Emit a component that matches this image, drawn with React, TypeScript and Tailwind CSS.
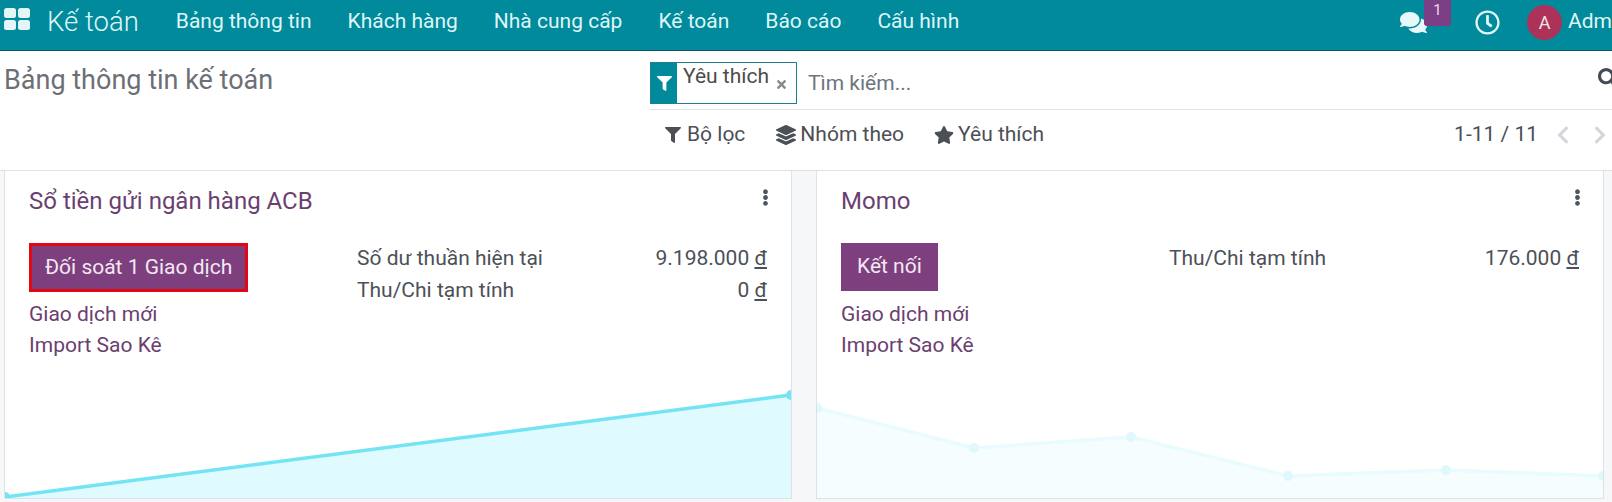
import { FaComments, FaEllipsisV, FaFilter, FaLayerGroup, FaSearch, FaStar, FaTimes, FaChevronLeft, FaChevronRight, FaRegClock } from 'react-icons/fa';

const menus = ['Bảng thông tin', 'Khách hàng', 'Nhà cung cấp', 'Kế toán', 'Báo cáo', 'Cấu hình'];

function AppsIcon() {
  return (
    <svg width="26" height="22" viewBox="0 0 26 22" fill="#e3f5f7">
      <rect x="0" y="0" width="12" height="10" rx="2.5" />
      <rect x="14" y="0" width="12" height="10" rx="2.5" />
      <rect x="0" y="12" width="12" height="10" rx="2.5" />
      <rect x="14" y="12" width="12" height="10" rx="2.5" />
    </svg>
  );
}

function Navbar() {
  return (
    <header className="flex h-[51px] items-center border-b border-[#11565f] bg-[#018a9b] pb-[6px] text-[#dff6f8]">
      <div className="mb-[6px] ml-[4px] flex w-[26px] shrink-0">
        <AppsIcon />
      </div>
      <span className="mr-[19px] ml-[17px] text-[27.5px] leading-none font-light">Kế toán</span>
      {menus.map((m) => (
        <a key={m} className="px-[18px] text-[21px] whitespace-nowrap">
          {m}
        </a>
      ))}
      <div className="relative ml-auto flex items-center">
        <FaComments className="text-[27px] text-[#e6f8fa]" />
        <span className="absolute top-[-5px] left-[24px] flex h-[26px] w-[27px] justify-center rounded-b-[3px] bg-[#7c3f85] text-[15px] leading-[20px] text-[#e8dcea]">
          1
        </span>
        <FaRegClock className="ml-[48px] text-[25px] text-[#e3f7f9]" />
        <span className="ml-[27px] flex h-[35px] w-[35px] items-center justify-center rounded-full bg-[#ad3259] text-[18px] text-[#f3e3e8]">
          A
        </span>
        <span className="ml-[6px] w-[44px] overflow-hidden text-[21px]">Admin</span>
      </div>
    </header>
  );
}

function ControlPanel() {
  return (
    <section className="h-[120px] border-b border-[#dee2e6] bg-white text-[#4c4c4c]">
      <div className="flex h-[59px]">
        <h1 className="w-[650px] pt-[13px] pl-[4px] text-[27px] leading-[32px] text-[#6c6f75]">Bảng thông tin kế toán</h1>
        <div className="flex flex-1 items-start border-b border-[#dee2e6] pt-[11px]">
          <div className="flex h-[42px] w-[147px] border border-[#1f7f8c]">
            <span className="flex w-[26px] items-center justify-center bg-[#018a9b] text-white">
              <FaFilter className="text-[15px]" />
            </span>
            <span className="ml-[6px] text-[21px] leading-[26px]">Yêu thích</span>
            <FaTimes className="mt-[15px] ml-[6px] text-[13px] text-[#8a8a8a]" />
          </div>
          <span className="mt-[6px] ml-[11px] text-[21px] leading-[30px] text-[#6c757d]">Tìm kiếm...</span>
          <FaSearch className="mt-[6px] ml-auto -mr-[6px] text-[20px] text-[#444b53]" />
        </div>
      </div>
      <div className="flex h-[50px] items-center pl-[665px] text-[21px] text-[#4c4f55]">
        <FaFilter className="text-[16px]" />
        <span className="ml-[6px]">Bộ lọc</span>
        <FaLayerGroup className="ml-[31px] text-[20px]" />
        <span className="ml-[4px]">Nhóm theo</span>
        <FaStar className="ml-[30px] text-[20px]" />
        <span className="ml-[4px]">Yêu thích</span>
        <span className="ml-auto">1-11 / 11</span>
        <FaChevronLeft className="ml-[15px] text-[20px] text-[#d3d6da]" />
        <FaChevronRight className="mr-[2px] ml-[17px] text-[20px] text-[#d3d6da]" />
      </div>
    </section>
  );
}

function Chart({ points, faded }: { points: number[][]; faded?: boolean }) {
  const line = points.map((p) => p.join(',')).join(' ');
  const area = `0,118 ${line} 786,118`;
  return (
    <svg viewBox="0 0 786 118" width="100%" height="118">
      <polygon points={area} fill={faded ? '#f5fdff' : '#e0fbff'} />
      <polyline points={line} fill="none" stroke={faded ? '#e8fbfd' : '#74e4f2'} strokeWidth="3.5" />
      {points.map((p) => (
        <circle key={p[0]} cx={p[0]} cy={p[1]} r="5" fill={faded ? '#def8fb' : '#74e4f2'} />
      ))}
    </svg>
  );
}

type Stat = { label: string; value: string };

function Card({
  title,
  action,
  highlighted,
  stats,
  points,
  faded,
}: {
  title: string;
  action: string;
  highlighted?: boolean;
  stats: Stat[];
  points: number[][];
  faded?: boolean;
}) {
  return (
    <article className="flex h-[328px] flex-col overflow-hidden border-x border-b border-[#dde2e8] bg-white">
      <div className="flex h-[72px] px-[24px] pt-[15px]">
        <h2 className="flex-1 text-[24px] leading-[30px] text-[#6b3f70]">{title}</h2>
        <FaEllipsisV className="mt-[3px] -mr-[7px] text-[17px] text-[#4c5560]" />
      </div>
      <div className="flex px-[24px] text-[21px]">
        <div className="w-[328px]">
          <button
            className={
              highlighted
                ? 'mb-[7px] block h-[49px] border-[3px] border-[#e30613] bg-[#7d3f7e] px-[13px] text-[#f2e9f2]'
                : 'mb-[8px] block h-[48px] bg-[#7d3f7e] px-[16px] text-[#f2e9f2]'
            }
          >
            {action}
          </button>
          <div className="leading-[31px] text-[#6b3f70]">
            <div>Giao dịch mới</div>
            <div>Import Sao Kê</div>
          </div>
        </div>
        <div className="-mt-[1px] flex-1 leading-[32px] text-[#4c5057]">
          {stats.map((s) => (
            <div key={s.label} className="flex justify-between">
              <span>{s.label}</span>
              <span>
                {s.value} <span className="underline">đ</span>
              </span>
            </div>
          ))}
        </div>
      </div>
      <div className="mt-auto">
        <Chart points={points} faded={faded} />
      </div>
    </article>
  );
}

export default function App() {
  return (
    <div className="h-[502px] w-[1612px] overflow-hidden bg-[#f6f7f9] font-['Roboto',sans-serif]">
      <Navbar />
      <ControlPanel />
      <main className="grid grid-cols-[788px_788px] gap-[24px] pl-[4px]">
        <Card
          title="Sổ tiền gửi ngân hàng ACB"
          action="Đối soát 1 Giao dịch"
          highlighted
          stats={[
            { label: 'Số dư thuần hiện tại', value: '9.198.000' },
            { label: 'Thu/Chi tạm tính', value: '0' },
          ]}
          points={[[0, 117], [786, 15]]}
        />
        <Card
          title="Momo"
          action="Kết nối"
          stats={[{ label: 'Thu/Chi tạm tính', value: '176.000' }]}
          points={[[0, 28], [157, 68], [314, 57], [471, 96], [629, 90], [786, 96]]}
          faded
        />
      </main>
    </div>
  );
}
